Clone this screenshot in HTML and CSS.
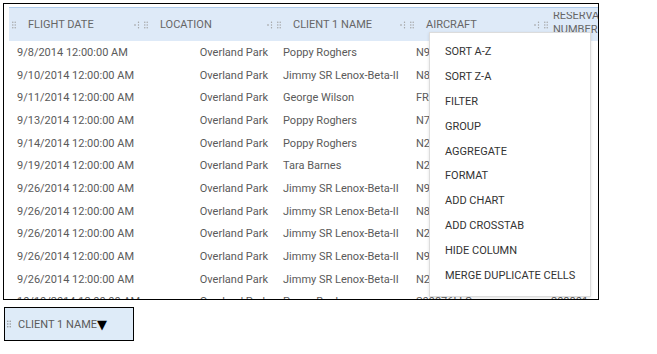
FILE: index.html
```html
<!DOCTYPE html>
<html>
<head>
    <title>Flights</title>
    <link rel="stylesheet" href="styles.css">
</head>
<body>
    <svg width="0" height="0" class="defs">
        <symbol id="grip" viewBox="0 0 4 8">
            <circle cx="0.8" cy="1.2" r="0.7"/><circle cx="3.2" cy="1.2" r="0.7"/>
            <circle cx="0.8" cy="4" r="0.7"/><circle cx="3.2" cy="4" r="0.7"/>
            <circle cx="0.8" cy="6.8" r="0.7"/><circle cx="3.2" cy="6.8" r="0.7"/>
        </symbol>
        <symbol id="resize" viewBox="0 0 6 8">
            <rect x="0" y="3.5" width="2" height="1"/>
            <circle cx="4.5" cy="1.2" r="0.7"/><circle cx="4.5" cy="4" r="0.7"/><circle cx="4.5" cy="6.8" r="0.7"/>
        </symbol>
    </svg>

    <!-- Grade de voos -->
    <div class="frame">
        <div class="grid">
            <div class="row head">
                <div class="hcell"><svg class="grip"><use href="#grip"/></svg><span>Flight Date</span><svg class="resize"><use href="#resize"/></svg></div>
                <div class="hcell"><svg class="grip"><use href="#grip"/></svg><span>Location</span><svg class="resize"><use href="#resize"/></svg></div>
                <div class="hcell"><svg class="grip"><use href="#grip"/></svg><span>Client 1 Name</span><svg class="resize"><use href="#resize"/></svg></div>
                <div class="hcell"><svg class="grip"><use href="#grip"/></svg><span>Aircraft</span><svg class="resize"><use href="#resize"/></svg></div>
                <div class="hcell"><svg class="grip"><use href="#grip"/></svg><span class="wrap">Reservation Number</span></div>
            </div>
            <div class="row"><div>9/8/2014 12:00:00 AM</div><div>Overland Park</div><div>Poppy Roghers</div><div>N955WT</div><div>208754</div></div>
            <div class="row"><div>9/10/2014 12:00:00 AM</div><div>Overland Park</div><div>Jimmy SR Lenox-Beta-II</div><div>N871CS</div><div>208761</div></div>
            <div class="row"><div>9/11/2014 12:00:00 AM</div><div>Overland Park</div><div>George Wilson</div><div>FRANCE</div><div>208766</div></div>
            <div class="row"><div>9/13/2014 12:00:00 AM</div><div>Overland Park</div><div>Poppy Roghers</div><div>N712PC</div><div>208770</div></div>
            <div class="row"><div>9/14/2014 12:00:00 AM</div><div>Overland Park</div><div>Poppy Roghers</div><div>N246RS</div><div>208771</div></div>
            <div class="row"><div>9/19/2014 12:00:00 AM</div><div>Overland Park</div><div>Tara Barnes</div><div>N229CH</div><div>208783</div></div>
            <div class="row"><div>9/26/2014 12:00:00 AM</div><div>Overland Park</div><div>Jimmy SR Lenox-Beta-II</div><div>N955WT</div><div>208790</div></div>
            <div class="row"><div>9/26/2014 12:00:00 AM</div><div>Overland Park</div><div>Jimmy SR Lenox-Beta-II</div><div>N871CS</div><div>208791</div></div>
            <div class="row"><div>9/26/2014 12:00:00 AM</div><div>Overland Park</div><div>Jimmy SR Lenox-Beta-II</div><div>N246RS</div><div>208792</div></div>
            <div class="row"><div>9/26/2014 12:00:00 AM</div><div>Overland Park</div><div>Jimmy SR Lenox-Beta-II</div><div>N955WT</div><div>208793</div></div>
            <div class="row"><div>9/26/2014 12:00:00 AM</div><div>Overland Park</div><div>Jimmy SR Lenox-Beta-II</div><div>N229CH</div><div>208794</div></div>
            <div class="row"><div>10/10/2014 12:00:00 AM</div><div>Overland Park</div><div>Poppy Roghers</div><div>S09876LLS</div><div>208801</div></div>
        </div>

        <!-- Menu da coluna -->
        <ul class="menu">
            <li>Sort A-Z</li>
            <li>Sort Z-A</li>
            <li>Filter</li>
            <li>Group</li>
            <li>Aggregate</li>
            <li>Format</li>
            <li>Add Chart</li>
            <li>Add Crosstab</li>
            <li>Hide Column</li>
            <li>Merge Duplicate Cells</li>
        </ul>
    </div>

    <!-- Coluna sendo arrastada -->
    <div class="drag">
        <svg class="grip"><use href="#grip"/></svg><span>Client 1 Name</span><span class="arrow">▼</span>
    </div>
</body>
</html>
```

FILE: styles.css
```css
body {
    margin: 0;
    font-family: Roboto, "Liberation Sans", sans-serif;
    font-size: 11px;
    color: #5a5a5a;
    background: #fff;
}
.defs {
    position: absolute;
}
.frame {
    position: relative;
    margin: 3px 0 0 3px;
    border: 1px solid #000;
    padding: 3px 0 0 5px;
    overflow: hidden;
    width: 589px;
    height: 292px;
}
.grid {
    width: 665px;
}
.row {
    display: grid;
    grid-template-columns: 132px 133px 133px 134px 133px;
    height: 22.7px;
    align-items: center;
    white-space: nowrap;
}
.row > div {
    overflow: hidden;
}
.row > div:nth-child(1) { padding-left: 8px; }
.row > div:nth-child(2) { text-align: right; padding-right: 6px; }
.row > div:nth-child(3) { padding-left: 9px; }
.row > div:nth-child(4) { padding-left: 9px; }
.row > div:nth-child(5) { padding-left: 10px; }
.row.head {
    height: 33px;
    background-color: #deeaf8;
    border-top: 1px solid #aecbec;
    color: #666;
    text-transform: uppercase;
    white-space: normal;
}
.row.head > .hcell {
    display: flex;
    align-items: center;
    padding: 0 1px 0 3px;
    text-align: left;
    line-height: 14px;
}
.hcell .wrap {
    width: 60px;
    margin-top: -3px;
}
.grip {
    width: 4px;
    height: 8px;
    fill: #a0a0a0;
    flex-shrink: 0;
    margin-right: 12px;
}
.resize {
    width: 6px;
    height: 8px;
    fill: #a0a0a0;
    margin-left: auto;
    flex-shrink: 0;
}
.hcell:nth-child(5) .grip {
    margin-right: 5px;
}
.menu {
    position: absolute;
    left: 425px;
    top: 28px;
    width: 160px;
    margin: 0;
    padding: 7px 0;
    list-style: none;
    background: #fff;
    border: 1px solid #dcdcdc;
    box-shadow: 0 1px 3px rgba(0, 0, 0, 0.12);
}
.menu li {
    height: 24.9px;
    line-height: 24.9px;
    padding-left: 15px;
    color: #333;
    text-transform: uppercase;
    white-space: nowrap;
}
.drag {
    margin: 7px 0 0 4px;
    width: 126px;
    height: 32px;
    border: 1px solid #000;
    background-color: #deebf8;
    display: flex;
    align-items: center;
    padding-left: 2px;
    text-transform: uppercase;
    color: #5a5a5a;
}
.drag .grip {
    margin-right: 7px;
    fill: #888;
}
.drag .arrow {
    color: #000;
    font-family: "DejaVu Sans", sans-serif;
    font-size: 13px;
}
```
